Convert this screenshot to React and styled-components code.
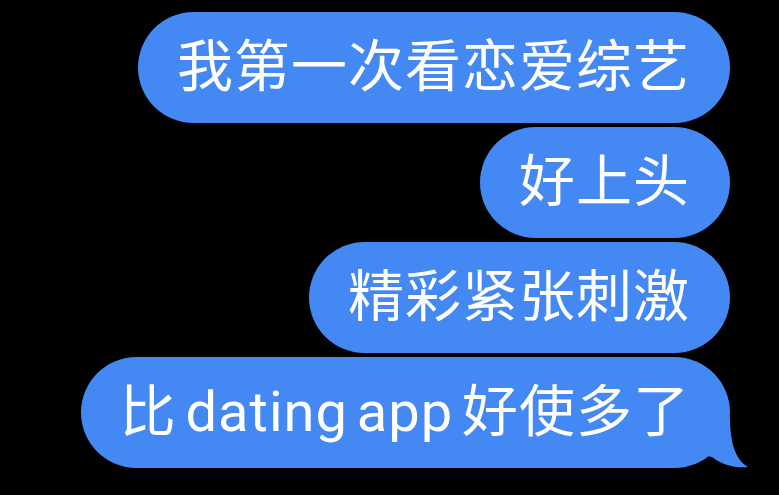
import React from 'react'
import styled, { createGlobalStyle } from 'styled-components'

const GlobalStyle = createGlobalStyle`
  html, body {
    margin: 0;
    padding: 0;
    background: #000;
  }
`

const messages = [
  '我第一次看恋爱综艺',
  '好上头',
  '精彩紧张刺激',
  '比 dating app 好使多了',
]

function App() {
  return (
    <Thread>
      <GlobalStyle />
      {messages.map((text, i) => (
        <Bubble key={i}>
          {text}
          {i === messages.length - 1 && (
            <Tail width="40" height="51" viewBox="0 0 40 51">
              <path d="M0 0 H22 C22 22 26 42 40 50 C28 51.5 14 48 4 40 C2 40 0 39 0 38 Z" fill="#4388f3" />
            </Tail>
          )}
        </Bubble>
      ))}
    </Thread>
  )
}

const Thread = styled.div`
  width: 779px;
  height: 495px;
  box-sizing: border-box;
  background: #000;
  display: flex;
  flex-direction: column;
  align-items: flex-end;
  gap: 4px;
  padding: 12px 49px 0 0;
  overflow: hidden;
`

const Bubble = styled.div`
  position: relative;
  height: 111px;
  box-sizing: border-box;
  padding: 0 40px 0 39px;
  border-radius: 56px;
  background: #4388f3;
  color: #fff;
  font-family: Roboto, "Noto Sans CJK SC", sans-serif;
  font-size: 56px;
  line-height: 111px;
  white-space: nowrap;
  letter-spacing: 1px;
  word-spacing: -6px;
`

const Tail = styled.svg`
  position: absolute;
  right: -18px;
  bottom: 0;
  display: block;
`

export default App
